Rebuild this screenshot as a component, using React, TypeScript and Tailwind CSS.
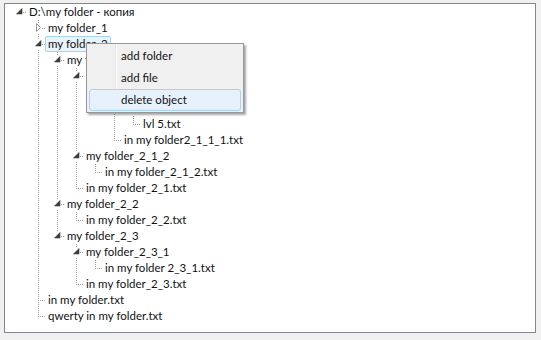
import React from "react";

type Node = {
  name: string;
  open?: boolean;
  folder?: boolean;
  selected?: boolean;
  children?: Node[];
};

const tree: Node = {
  name: "D:\\my folder - копия",
  folder: true,
  open: true,
  children: [
    { name: "my folder_1", folder: true, open: false, children: [{ name: "x" }] },
    {
      name: "my folder_2",
      folder: true,
      open: true,
      selected: true,
      children: [
        {
          name: "my folder_2_1",
          folder: true,
          open: true,
          children: [
            {
              name: "my folder_2_1_1",
              folder: true,
              open: true,
              children: [
                {
                  name: "my folder_2_1_1_1",
                  folder: true,
                  open: true,
                  children: [
                    { name: "lvl 4", folder: true, open: true, children: [{ name: "lvl 5.txt" }] },
                    { name: "in my folder2_1_1_1.txt" },
                  ],
                },
              ],
            },
            {
              name: "my folder_2_1_2",
              folder: true,
              open: true,
              children: [{ name: "in my folder_2_1_2.txt" }],
            },
            { name: "in my folder_2_1.txt" },
          ],
        },
        {
          name: "my folder_2_2",
          folder: true,
          open: true,
          children: [{ name: "in my folder_2_2.txt" }],
        },
        {
          name: "my folder_2_3",
          folder: true,
          open: true,
          children: [
            {
              name: "my folder_2_3_1",
              folder: true,
              open: true,
              children: [{ name: "in my folder 2_3_1.txt" }],
            },
            { name: "in my folder_2_3.txt" },
          ],
        },
      ],
    },
    { name: "in my folder.txt" },
    { name: "qwerty in my folder.txt" },
  ],
};

type Row = { node: Node; level: number; last: boolean; guides: boolean[] };

// flatten the visible part of the tree; guides[j] = ancestor at level j has a sibling below
const flatten = (node: Node, level: number, last: boolean, guides: boolean[], out: Row[]) => {
  out.push({ node, level, last, guides });
  if (node.open && node.children) {
    node.children.forEach((c, i) => {
      flatten(c, level + 1, i === node.children!.length - 1, [...guides, !last], out);
    });
  }
  return out;
};

const rows = flatten(tree, 0, true, [], []);

const DOT = "#a0a0a0";

const Guide = ({ on }: { on: boolean }) => (
  <svg width="19" height="16" className="shrink-0">
    {on && (
      <line x1="9.5" y1="0" x2="9.5" y2="16" stroke={DOT} strokeDasharray="1 1" shapeRendering="crispEdges" />
    )}
  </svg>
);

const Connector = ({ row }: { row: Row }) => {
  const { node, level, last } = row;
  return (
    <svg width="19" height="16" className="shrink-0">
      {level > 0 && (
        <line x1="9.5" y1="0" x2="9.5" y2={last ? 8 : 16} stroke={DOT} strokeDasharray="1 1" shapeRendering="crispEdges" />
      )}
      <line x1="9" y1="8.5" x2="17" y2="8.5" stroke={DOT} strokeDasharray="1 1" shapeRendering="crispEdges" />
      {node.folder && (
        <>
          <rect x="5" y="3" width="8" height="10" fill="#ffffff" />
          {node.open ? (
            <path d="M12 4.5 L12 10 L6.5 10 Z" fill="#3c3c3c" stroke="#3c3c3c" strokeWidth="0.6" />
          ) : (
            <path d="M7.5 3.5 L7.5 11.5 L11.5 7.5 Z" fill="#ffffff" stroke="#989898" strokeWidth="1" />
          )}
        </>
      )}
    </svg>
  );
};

export default function App() {
  return (
    <div
      className="relative w-[541px] h-[340px] bg-[#f0f0f0] pt-[3px] pl-[4px] text-[11.5px] text-[#111]"
      style={{ fontFamily: 'Lato, "Noto Sans", sans-serif' }}
    >
      <div className="w-[532px] h-[330px] bg-white border border-[#828790] pl-[5px]">
        {rows.map((r, i) => (
          <div key={i} className="flex h-4 items-center">
            {r.guides.slice(0, r.level).map((g, j) => (
              <Guide key={j} on={j > 0 && g} />
            ))}
            <Connector row={r} />
            <span
              className={
                "-ml-[3px] px-[2px] h-4 leading-[14px] whitespace-nowrap border rounded-[2px] " +
                (r.node.selected ? "bg-[#e8f4fc] border-[#a9d3ef]" : "border-transparent")
              }
            >
              {r.node.name}
            </span>
          </div>
        ))}
      </div>

      {/* context menu */}
      <div className="absolute left-[86px] top-[43px] w-[158px] h-[70px] bg-[#f0f0f0] border border-[#979797] p-[1px] shadow-[2px_2px_2px_rgba(0,0,0,0.35)]">
        <div className="relative flex flex-col h-full px-[1px]">
          <div className="absolute left-[27px] top-0 bottom-0 w-[2px] border-l border-[#e2e3e3] border-r border-r-white" />
          <div className="h-[22px] flex items-center pl-[31px] border border-transparent">add folder</div>
          <div className="h-[22px] flex items-center pl-[31px] border border-transparent">add file</div>
          <div className="relative h-[22px] flex items-center pl-[31px] bg-[#e6f1fb] border border-[#a8d3ee] rounded-[3px]">
            delete object
          </div>
        </div>
      </div>
    </div>
  );
}
